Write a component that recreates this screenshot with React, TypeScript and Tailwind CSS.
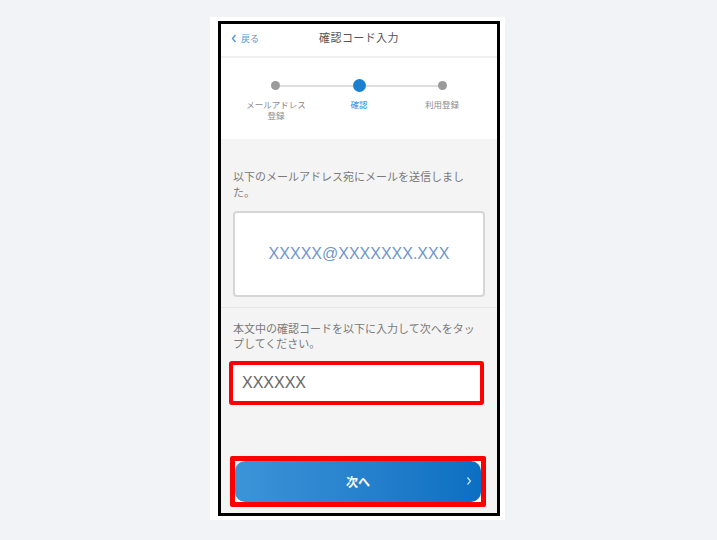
import React from "react";

const jp = { fontFamily: '"Noto Sans CJK JP", "Noto Sans", sans-serif' };

export default function App() {
  return (
    <div className="w-[717px] h-[540px] bg-[#f2f3f7] overflow-hidden" style={jp}>
      <div className="ml-[210px] mt-[17px] w-[295px] h-[503px] bg-white pl-[8px] pt-[4px]">
        <div className="w-[282px] h-[495px] border-[3px] border-black flex flex-col bg-white">
          {/* Header */}
          <div className="h-[34px] relative flex items-center justify-center border-b-2 border-[#efefef]">
            <div className="absolute left-[10px] top-[8px] flex items-center gap-[4px] text-[#4f9bd9] text-[9px]">
              <svg width="6" height="9" viewBox="0 0 6 9">
                <path d="M4.5 1 L1.5 4.5 L4.5 8" fill="none" stroke="#4f9bd9" strokeWidth="1.4" />
              </svg>
              <span>戻る</span>
            </div>
            <span className="text-[11px] tracking-[0.4px] text-[#555] -mt-[6px]">確認コード入力</span>
          </div>
          {/* Stepper */}
          <div className="h-[81px] bg-white pt-[21px]">
            <div className="flex items-center pl-[50px] pr-[50px] h-[13px]">
              <div className="w-[9px] h-[9px] rounded-full bg-[#9a9a9a]" />
              <div className="flex-1 h-[2px] bg-[#dddddd]" />
              <div className="w-[13px] h-[13px] rounded-full bg-[#1a80cf]" />
              <div className="flex-1 h-[2px] bg-[#dddddd]" />
              <div className="w-[9px] h-[9px] rounded-full bg-[#9a9a9a]" />
            </div>
            <div className="flex justify-between px-[20px] mt-[7px] text-[8.5px] leading-[11px]">
              <div className="w-[70px] text-center text-[#8a8a8a]">
                メールアドレス
                <br />
                登録
              </div>
              <div className="w-[70px] text-center text-[#2a8ad6]">確認</div>
              <div className="w-[70px] text-center text-[#8a8a8a]">利用登録</div>
            </div>
          </div>
          {/* Gray body */}
          <div className="flex-1 bg-[#f4f4f4] flex flex-col">
            <div className="px-[12px] pt-[29px] pb-[10px] border-b border-[#e6e6e6]">
              <p className="text-[11px] leading-[16px] text-[#7a7a7a]">
                以下のメールアドレス宛にメールを送信しました。
              </p>
              <div className="mt-[11px] h-[86px] bg-white border-2 border-[#d6d6d6] rounded-[4px] flex items-center justify-center">
                <span
                  className="text-[16px] text-[#6f96cc]"
                  style={{ fontFamily: '"Liberation Sans", Arial, sans-serif' }}
                >
                  XXXXX@XXXXXXX.XXX
                </span>
              </div>
            </div>
            <div className="px-[12px] pt-[13px]">
              <p className="text-[11px] leading-[15px] text-[#7a7a7a]">
                本文中の確認コードを以下に入力して次へをタップしてください。
              </p>
            </div>
            <div className="ml-[8px] mr-[13px] mt-[10px] h-[44px] border-4 border-[#ff0000] rounded-[3px] bg-white flex items-center pl-[9px]">
              <span
                className="text-[16px] text-[#666]"
                style={{ fontFamily: '"Liberation Sans", Arial, sans-serif' }}
              >
                XXXXXX
              </span>
            </div>
            <div className="ml-[9px] mr-[11px] mt-[51px] h-[51px] border-[5px] border-[#ff0000] rounded-[2px] bg-white">
              <div className="h-full rounded-[10px] bg-gradient-to-r from-[#3c94d8] to-[#0a6fc2] flex items-center justify-center relative">
                <span className="text-[12px] font-bold text-white">次へ</span>
                <svg className="absolute right-[9px] top-[15px]" width="6" height="10" viewBox="0 0 6 10">
                  <path d="M1.5 1.5 L4.5 5 L1.5 8.5" fill="none" stroke="#cfe3f5" strokeWidth="1.2" />
                </svg>
              </div>
            </div>
          </div>
        </div>
      </div>
    </div>
  );
}
